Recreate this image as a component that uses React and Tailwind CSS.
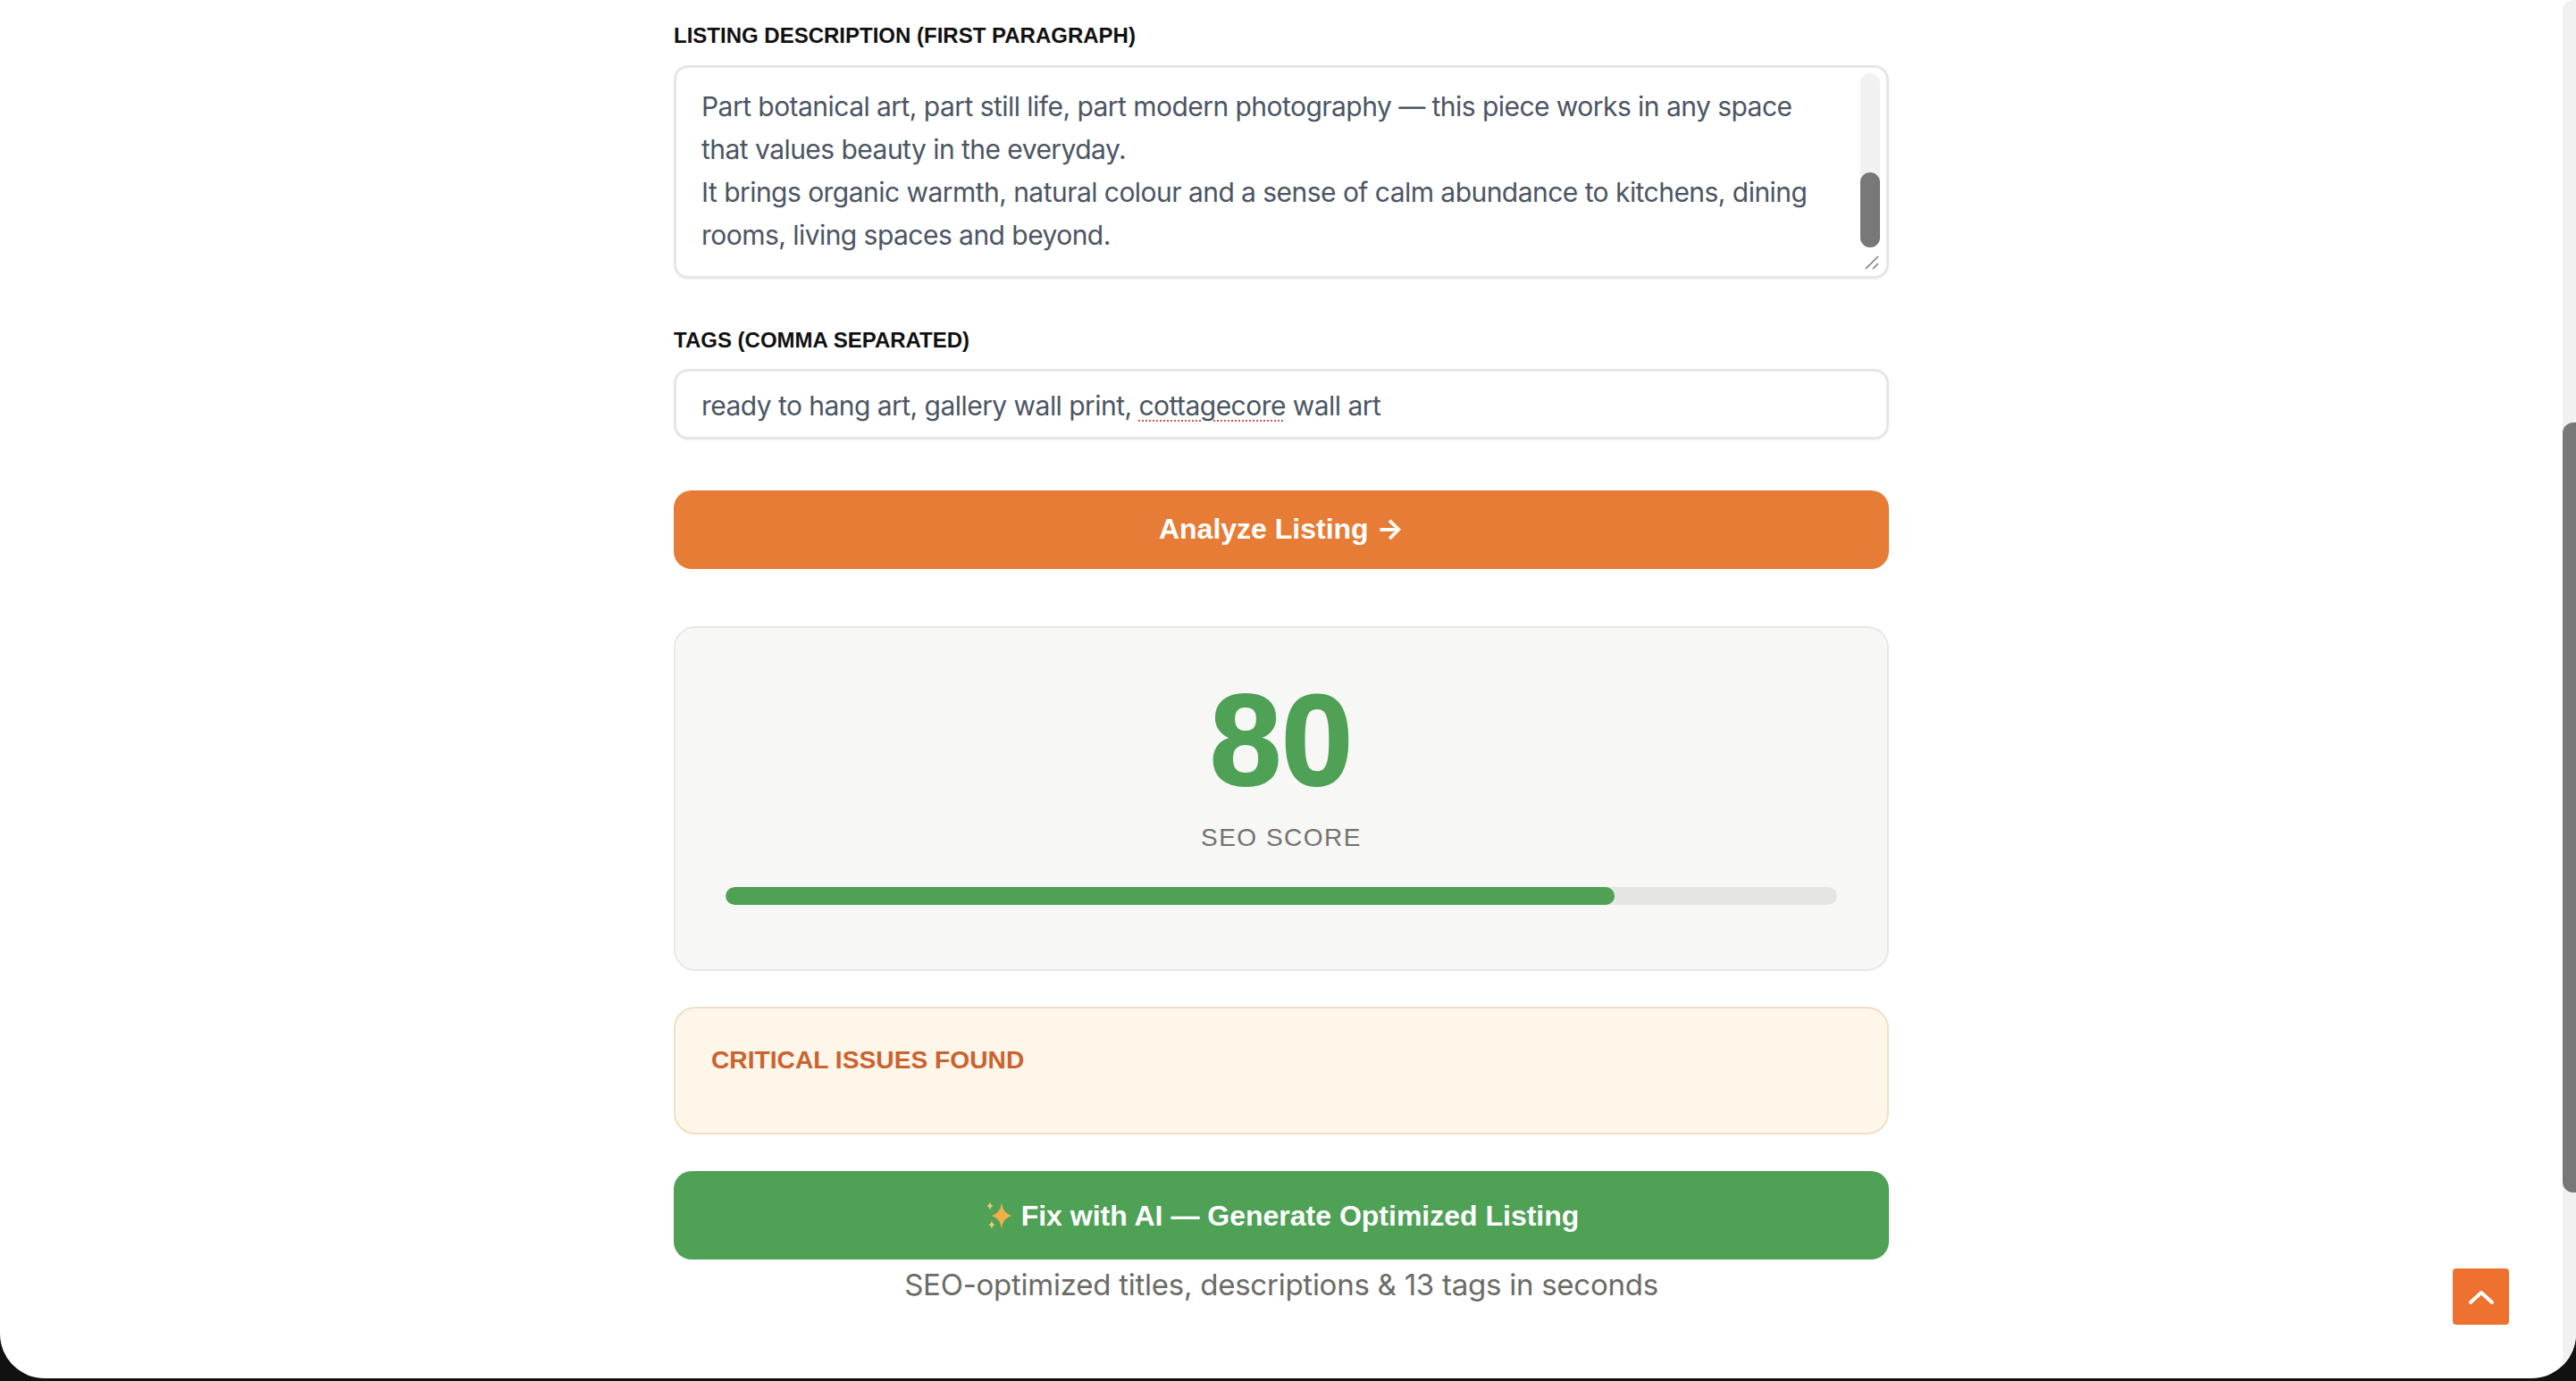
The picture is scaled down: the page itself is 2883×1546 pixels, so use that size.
const SANS = "font-['Liberation_Sans',Arial,sans-serif]";

const FieldLabel = ({ children, className }) => (
  <div className={`text-[24px] leading-[36px] font-bold text-[#111111] ${className}`}>{children}</div>
);

const Sparkle = () => (
  <svg className="w-[36px] h-[32px] mr-[6px]" viewBox="0 0 36 32" fill="none">
    <path d="M20 1c1.400 9 3.400 11.500 11 15-7.600 3.500-9.600 6-11 15-1.400-9-3.400-11.500-11-15 7.600-3.500 9.600-6 11-15z" fill="#f2ae48" />
    <path d="M7 0c.5 3 1.300 4 3.500 5-2.200 1-3 2-3.500 5-.5-3-1.300-4-3.500-5 2.200-1 3-2 3.500-5z" fill="#f5c96b" />
    <path d="M9 21c.5 3 1.300 4 3.500 5-2.200 1-3 2-3.500 5-.5-3-1.300-4-3.500-5 2.200-1 3-2 3.500-5z" fill="#f5c96b" />
  </svg>
);

export default function App() {
  return (
    <div className={`h-[1546px] w-full bg-[#111111] overflow-hidden ${SANS}`}>
      <div className="relative h-[1543px] bg-white rounded-b-[50px] overflow-hidden flex">
        <main className="flex-1 flex flex-col items-center pt-[22px]">
          <div className="w-[1360px] flex flex-col">
            <FieldLabel className="mb-[15px]">LISTING DESCRIPTION (FIRST PARAGRAPH)</FieldLabel>

            {/* textarea */}
            <div className="h-[239px] border-[3px] border-[#e6e6e4] rounded-[16px] bg-white flex pl-[28px] pr-[7px] pt-[6px] shadow-[0_1px_2px_rgba(0,0,0,0.05)]">
              <div className="flex-1 min-w-0 pt-[13px] text-[30px] leading-[48px] text-[#4b5563] font-['Inter',sans-serif] tracking-[-0.54px] whitespace-nowrap">
                Part botanical art, part still life, part modern photography — this piece works in any space
                <br />
                that values beauty in the everyday.
                <br />
                It brings organic warmth, natural colour and a sense of calm abundance to kitchens, dining
                <br />
                rooms, living spaces and beyond.
              </div>
              <div className="w-[22px] flex flex-col">
                <div className="h-[195px] w-[22px] rounded-[11px] bg-[#f1f1f1] flex flex-col justify-end">
                  <div className="h-[84px] w-[22px] rounded-[11px] bg-[#787878]" />
                </div>
                <svg className="w-[16px] h-[16px] mt-[9px] ml-[5px]" viewBox="0 0 16 16" fill="none" stroke="#777777" strokeWidth="1.500">
                  <path d="M1 15 15 1M9 15l6-6" />
                </svg>
              </div>
            </div>

            <FieldLabel className="mt-[51px] mb-[14px]">TAGS (COMMA SEPARATED)</FieldLabel>

            <div className="h-[79px] border-[3px] border-[#e6e6e4] rounded-[16px] bg-white flex items-center pl-[28px] pt-[3px] text-[30px] text-[#4b5563] font-['Inter',sans-serif] tracking-[-0.54px] shadow-[0_1px_2px_rgba(0,0,0,0.05)]">
              <span>
                ready to hang art, gallery wall print,{" "}
                <span className="underline decoration-dotted decoration-[#d9534f] decoration-2 underline-offset-[6px]">cottagecore</span> wall art
              </span>
            </div>

            <button className="mt-[57px] pb-[2px] h-[88px] w-full rounded-[20px] bg-[#e67c35] text-white text-[32px] font-bold">
              Analyze Listing <span className="font-['Inter',sans-serif]">→</span>
            </button>

            {/* score */}
            <div className="mt-[64px] h-[386px] rounded-[24px] border-2 border-[#e8e8e6] bg-[#f7f7f5] flex flex-col items-center px-[56px]">
              <div className="mt-[55px] text-[144px] leading-[144px] font-bold text-[#4ea155] [-webkit-text-stroke:2px_#4ea155]">80</div>
              <div className="mt-[18px] text-[28px] leading-[36px] tracking-[1.500px] text-[#73736e]">SEO SCORE</div>
              <div className="mt-[37px] w-full h-[20px] rounded-full bg-[#e5e5e2] overflow-hidden">
                <div className="h-full w-[80%] rounded-full bg-[#4ea155]" />
              </div>
            </div>

            <div className="mt-[40px] h-[143px] rounded-[24px] border-2 border-[#f0dfc2] bg-[#fdf6e9] pl-[40px] pt-[39px]">
              <div className="text-[28.200px] leading-[36px] font-bold text-[#cb6230]">CRITICAL ISSUES FOUND</div>
            </div>

            <button className="mt-[41px] h-[99px] w-full rounded-[20px] bg-[#4ea155] text-white text-[32px] font-bold flex items-center justify-center">
              <Sparkle />
              Fix with AI — Generate Optimized Listing
            </button>

            <div className="mt-[6px] text-center text-[33px] leading-[44px] tracking-[-0.25px] text-[#6b6b66] font-['Inter',sans-serif]">
              SEO-optimized titles, descriptions &amp; 13 tags in seconds
            </div>
          </div>
        </main>

        {/* page scrollbar */}
        <div className="w-[15px] bg-[#f1f1f1] rounded-tl-[12px] flex flex-col pt-[473px]">
          <div className="h-[862px] bg-[#787878] rounded-l-[12px]" />
        </div>

        {/* back to top */}
        <button className="absolute left-[2745px] top-[1420px] w-[63px] h-[63px] rounded-[4px] bg-[#ee7130] flex items-center justify-center">
          <svg className="w-[30px] h-[18px]" viewBox="0 0 30 18" fill="none" stroke="#ffffff" strokeWidth="4" strokeLinecap="round" strokeLinejoin="round">
            <path d="M3 15 15 4l12 11" />
          </svg>
        </button>
      </div>
    </div>
  );
}
